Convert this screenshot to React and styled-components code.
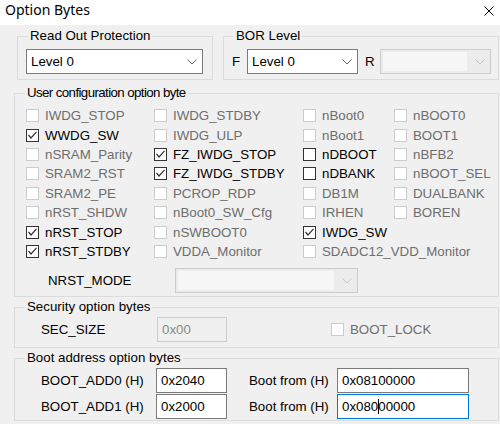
import React from 'react';
import styled, { createGlobalStyle } from 'styled-components';

const GlobalStyle = createGlobalStyle`
  html, body {
    margin: 0;
    padding: 0;
    background: #f0f0f0;
  }
  body {
    font-family: "Liberation Sans", Arial, sans-serif;
    font-size: 13.3px;
    color: #000;
  }
  * {
    box-sizing: border-box;
  }
`;

const userOptions = [
  ['IWDG_STOP', 'd'], ['IWDG_STDBY', 'd'], ['nBoot0', 'd'], ['nBOOT0', 'd'],
  ['WWDG_SW', 'c'], ['IWDG_ULP', 'd'], ['nBoot1', 'd'], ['BOOT1', 'd'],
  ['nSRAM_Parity', 'd'], ['FZ_IWDG_STOP', 'c'], ['nDBOOT', 'e'], ['nBFB2', 'd'],
  ['SRAM2_RST', 'd'], ['FZ_IWDG_STDBY', 'c'], ['nDBANK', 'e'], ['nBOOT_SEL', 'd'],
  ['SRAM2_PE', 'd'], ['PCROP_RDP', 'd'], ['DB1M', 'd'], ['DUALBANK', 'd'],
  ['nRST_SHDW', 'd'], ['nBoot0_SW_Cfg', 'd'], ['IRHEN', 'd'], ['BOREN', 'd'],
  ['nRST_STOP', 'c'], ['nSWBOOT0', 'd'], ['IWDG_SW', 'c'], null,
  ['nRST_STDBY', 'c'], ['VDDA_Monitor', 'd'], ['SDADC12_VDD_Monitor', 'd', 2],
];

const Chevron = ({ disabled }) => (
  <svg width="10" height="6" viewBox="0 0 10 6">
    <polyline
      points="0.5,0.5 5,5 9.5,0.5"
      fill="none"
      stroke={disabled ? '#c4c4c4' : '#606060'}
      strokeWidth="1"
    />
  </svg>
);

const Combo = ({ value, width, disabled }) => (
  <SCombo $w={width} $disabled={disabled}>
    <SComboValue $disabled={disabled}>{value}</SComboValue>
    <Chevron disabled={disabled} />
  </SCombo>
);

const CheckBox = ({ label, state, span }) => {
  const disabled = state === 'd';
  return (
    <SCheck $disabled={disabled} $span={span}>
      <SBox $disabled={disabled}>
        {state === 'c' && (
          <svg width="11" height="11" viewBox="0 0 11 11">
            <polyline points="1.5,5 4,8 9.5,1.8" fill="none" stroke="#333" strokeWidth="1.2" />
          </svg>
        )}
      </SBox>
      {label}
    </SCheck>
  );
};

export default function App() {
  return (
    <>
      <GlobalStyle />
      <SWindow>
        <STitleBar>
          <STitle>Option Bytes</STitle>
          <svg width="10" height="10" viewBox="0 0 10 10">
            <path d="M0.5 0.5 L9.5 9.5 M9.5 0.5 L0.5 9.5" stroke="#000" strokeWidth="1" />
          </svg>
        </STitleBar>

        <SBody>
          <STopRow>
            <SGroup $width={196} $pad="6px 9px 5px 8px">
              <SLegend $indent={2}>Read Out Protection</SLegend>
              <Combo value="Level 0" width={177} />
            </SGroup>
            <SGroup $grow $pad="6px 5px 5px 8px">
              <SLegend $indent={2}>BOR Level</SLegend>
              <SBorRow>
                <SLetter>F</SLetter>
                <Combo value="Level 0" width={111} />
                <SLetter $ml={7}>R</SLetter>
                <Combo value="" width={111} disabled />
              </SBorRow>
            </SGroup>
          </STopRow>

          <SGroup $mt={6} $pad="6px 11px 3px 11px">
            <SLegend $indent={-1} $tight>User configuration option byte</SLegend>
            <SCheckGrid>
              {userOptions.map((o, i) =>
                o ? <CheckBox key={i} label={o[0]} state={o[1]} span={o[2]} /> : <span key={i} />
              )}
            </SCheckGrid>
            <SModeRow>
              <SModeLabel>NRST_MODE</SModeLabel>
              <Combo value="" width={183} disabled />
            </SModeRow>
          </SGroup>

          <SGroup $mt={3} $pad="3px 11px 5px 11px">
            <SLegend $indent={-1}>Security option bytes</SLegend>
            <SFieldRow>
              <SFieldLabel $w={116}>SEC_SIZE</SFieldLabel>
              <SField $w={70} $disabled>0x00</SField>
              <SLockSlot>
                <CheckBox label="BOOT_LOCK" state="d" />
              </SLockSlot>
            </SFieldRow>
          </SGroup>

          <SGroup $mt={3} $pad="3px 11px 1px 11px">
            <SLegend $indent={-1}>Boot address option bytes</SLegend>
            <SAddrList>
              <SFieldRow>
                <SFieldLabel $w={115}>BOOT_ADD0 (H)</SFieldLabel>
                <SField $w={71}>0x2040</SField>
                <SFromLabel>Boot from (H)</SFromLabel>
                <SField $w={132}>0x08100000</SField>
              </SFieldRow>
              <SFieldRow>
                <SFieldLabel $w={115}>BOOT_ADD1 (H)</SFieldLabel>
                <SField $w={71}>0x2000</SField>
                <SFromLabel>Boot from (H)</SFromLabel>
                <SField $w={132} $focused>
                  0x080<SCaret />00000
                </SField>
              </SFieldRow>
            </SAddrList>
          </SGroup>
        </SBody>
      </SWindow>
    </>
  );
}

const SWindow = styled.div`
  width: 500px;
  height: 424px;
  background: #f0f0f0;
  overflow: hidden;
`;

const STitleBar = styled.header`
  height: 25px;
  background: #fff;
  display: flex;
  justify-content: space-between;
  align-items: flex-start;
  padding: 0 6px 0 5px;

  svg {
    margin-top: 6px;
  }
`;

const STitle = styled.h1`
  margin: 0;
  font: 400 14px/19px "Noto Sans", "Liberation Sans", sans-serif;
  color: #000;
`;

const SBody = styled.main`
  display: flex;
  flex-direction: column;
  padding: 4px 1px 0 14px;
`;

const STopRow = styled.div`
  display: flex;
  gap: 10px;
  margin-left: 3px;
`;

const SGroup = styled.fieldset`
  margin: ${(p) => p.$mt || 0}px 0 0 0;
  padding: ${(p) => p.$pad};
  border: 1px solid #dcdcdc;
  min-width: 0;
  width: ${(p) => (p.$width ? `${p.$width}px` : 'auto')};
  flex: ${(p) => (p.$grow ? '1' : 'none')};
`;

const SLegend = styled.legend`
  padding: 0 2px;
  margin-left: ${(p) => p.$indent || 0}px;
  line-height: 14px;
  font-size: 13.3px;
  letter-spacing: ${(p) => (p.$tight ? '-0.6px' : 'normal')};
  color: #000;
`;

const SCombo = styled.div`
  width: ${(p) => p.$w}px;
  height: 25px;
  flex: none;
  display: flex;
  align-items: center;
  gap: 8px;
  padding: 2px 5px 2px 2px;
  border: 1px solid ${(p) => (p.$disabled ? '#cccccc' : '#7a7a7a')};
  background: ${(p) => (p.$disabled ? '#ececec' : '#fff')};
`;

const SComboValue = styled.span`
  flex: 1;
  align-self: stretch;
  display: flex;
  align-items: center;
  padding-left: 2px;
  background: ${(p) => (p.$disabled ? '#f6f6f6' : 'transparent')};
`;

const SBorRow = styled.div`
  display: flex;
  align-items: center;
`;

const SLetter = styled.span`
  width: 15px;
  margin-left: ${(p) => p.$ml || 0}px;
  flex: none;
`;

const SCheckGrid = styled.div`
  display: grid;
  grid-template-columns: 128px 149px 91px 1fr;
  grid-template-rows: repeat(8, 19.4px);
`;

const SCheck = styled.label`
  display: flex;
  align-items: center;
  gap: 6px;
  white-space: nowrap;
  color: ${(p) => (p.$disabled ? '#6d6d6d' : '#000')};
  grid-column: ${(p) => (p.$span ? `span ${p.$span}` : 'auto')};
`;

const SBox = styled.span`
  width: 13px;
  height: 13px;
  flex: none;
  display: flex;
  align-items: center;
  justify-content: center;
  background: #fff;
  border: 1px solid ${(p) => (p.$disabled ? '#cccccc' : '#333333')};
`;

const SModeRow = styled.div`
  display: flex;
  align-items: center;
  margin-top: 7px;
`;

const SModeLabel = styled.span`
  width: 149px;
  padding-left: 22px;
`;

const SFieldRow = styled.div`
  display: flex;
  align-items: center;
`;

const SFieldLabel = styled.span`
  width: ${(p) => p.$w}px;
  margin-left: 15px;
  flex: none;
`;

const SFromLabel = styled.span`
  width: 88px;
  margin-left: 22px;
  flex: none;
`;

const SField = styled.div`
  width: ${(p) => p.$w}px;
  height: 25px;
  flex: none;
  display: flex;
  align-items: center;
  padding-left: 4px;
  border: 1px solid ${(p) => (p.$focused ? '#0078d7' : p.$disabled ? '#cccccc' : '#7a7a7a')};
  background: ${(p) => (p.$disabled ? '#f0f0f0' : '#fff')};
  color: ${(p) => (p.$disabled ? '#8a8a8a' : '#000')};
`;

const SCaret = styled.span`
  display: inline-block;
  width: 1px;
  height: 15px;
  margin-right: -1px;
  background: #000;
`;

const SLockSlot = styled.div`
  margin-left: 104px;
`;

const SAddrList = styled.div`
  display: flex;
  flex-direction: column;
  gap: 1px;
`;
